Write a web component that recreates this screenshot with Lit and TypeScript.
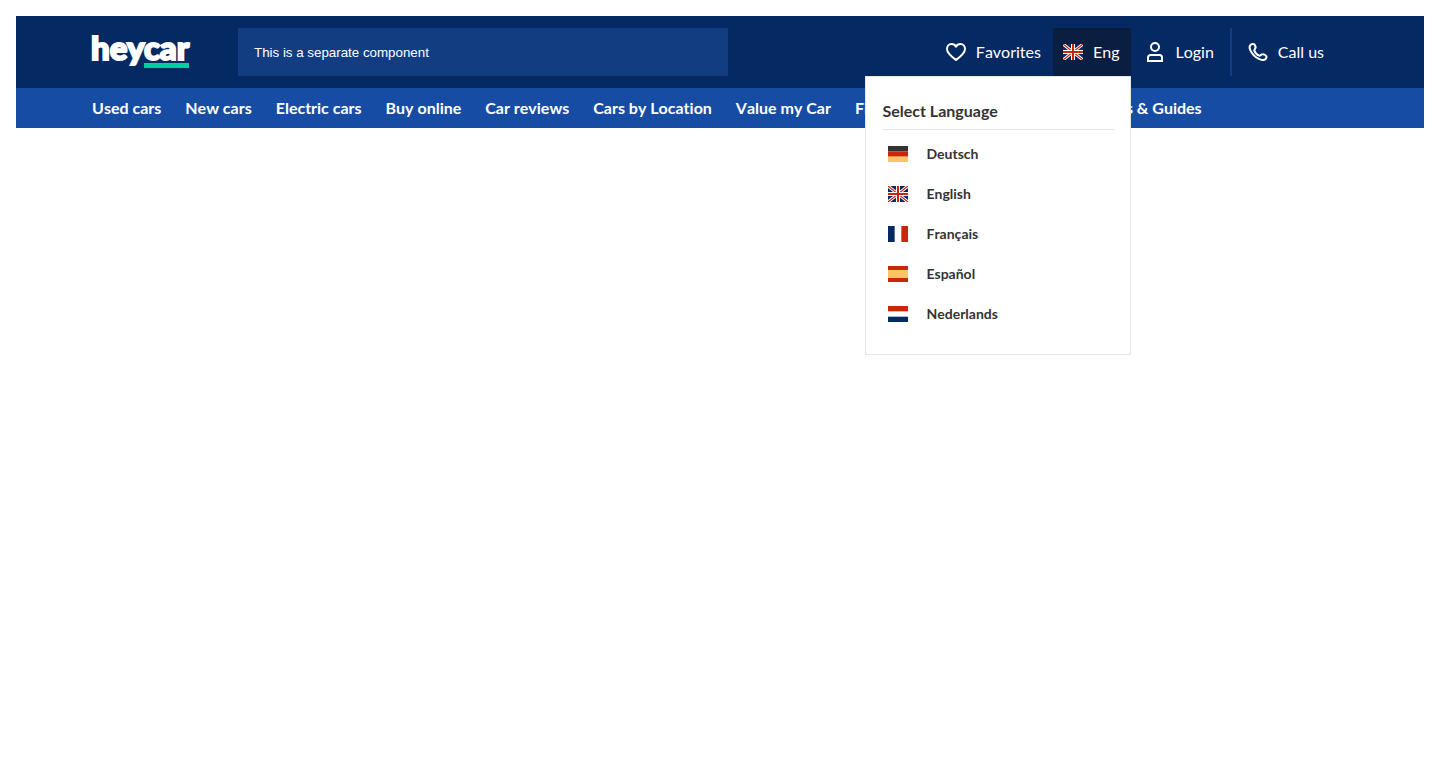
import { LitElement, html, css, svg } from "lit";
import { customElement, state } from "lit/decorators.js";

const flags: Record<string, unknown> = {
  de: svg`<path fill="#333" d="M0 0h20v5.33H0z"/><path fill="#c9260c" d="M0 5.33h20v5.34H0z"/><path fill="#fbc465" d="M0 10.67h20V16H0z"/>`,
  en: svg`<path fill="#052962" d="M0 0h20v16H0z"/>
    <path stroke="#fff" stroke-width="3" d="M0 0l20 16M20 0L0 16"/>
    <path stroke="#c9260c" stroke-width="1.2" d="M0 0l20 16M20 0L0 16"/>
    <path fill="#fff" d="M8 0h4v16H8zM0 6h20v4H0z"/>
    <path fill="#c9260c" d="M9 0h2v16H9zM0 7h20v2H0z"/>`,
  fr: svg`<path fill="#fff" d="M0 0h20v16H0z"/><path fill="#052962" d="M0 0h6.67v16H0z"/><path fill="#c9260c" d="M13.33 0H20v16h-6.67z"/>`,
  es: svg`<path fill="#c9260c" d="M0 0h20v16H0z"/><path fill="#fbc465" d="M0 4h20v8H0z"/>`,
  nl: svg`<path fill="#fff" d="M0 0h20v16H0z"/><path fill="#c9260c" d="M0 0h20v5.33H0z"/><path fill="#052962" d="M0 10.67h20V16H0z"/>`,
};

const flag = (code: string) =>
  html`<svg class="flag" viewBox="0 0 20 16" aria-hidden="true">${flags[code]}</svg>`;

const icon = (shape: unknown) =>
  html`<svg class="icon" viewBox="0 0 24 24" fill="none" stroke="#fff" stroke-width="2" aria-hidden="true">${shape}</svg>`;

const heart = svg`<path stroke-linejoin="round" d="M12 20C8 17 3 13.3 3 8.900C3 6 5 4 7.500 4C9.500 4 11.200 5 12 6.700C12.800 5 14.500 4 16.500 4C19 4 21 6 21 8.900C21 13.300 16 17 12 20Z"/>`;
const person = svg`<circle cx="12" cy="7" r="4"/><path d="M5 21v-3.500A2.500 2.500 0 0 1 7.500 15h9a2.500 2.500 0 0 1 2.500 2.500V21Z"/>`;
const phone = svg`<path stroke-linejoin="round" d="M4.300 5.200C5.500 3.800 7.600 3.500 8.600 4.700C9.500 5.900 9.800 7.400 9.200 8.600C8.800 9.400 8 9.700 8.300 10.600C9 12.800 11 14.700 13.300 15.600C14.200 15.900 14.500 15 15.300 14.700C16.700 14.100 18.800 14.600 20 15.700C21 16.700 20.500 18.500 19.200 19.400C17.700 20.500 15.500 20 13.400 19.100C9.400 17.400 5.900 13.800 4.200 9.800C3.500 8.200 3.200 6.500 4.300 5.200Z"/>`;

@customElement("app-root")
export class AppRoot extends LitElement {
  static styles = css`
    :host {
      display: block;
      box-sizing: border-box;
      min-height: 100vh;
      padding: 16px;
      font: 400 16px/24px Lato, sans-serif;
      font-kerning: none;
      font-variant-ligatures: none;
      color: #333;
    }
    a { color: inherit; text-decoration: none; }
    button { font: inherit; font-kerning: inherit; color: inherit; border: 0; background: none; margin: 0; cursor: pointer; }
    .top {
      display: flex;
      align-items: center;
      padding: 12px 76px;
      background: #052962;
      color: #fff;
    }
    .logo { display: block; width: 98px; height: 36px; margin-right: 48px; flex: none; }
    .logo svg { display: block; overflow: visible; }
    .wordmark {
      font: 900 33px Lato, sans-serif;
      font-kerning: normal;
      fill: #fff;
      stroke: #fff;
      stroke-width: 2px;
    }
    .search {
      box-sizing: border-box;
      flex: 0 1 490px;
      min-width: 0;
      height: 48px;
      padding: 0 16px;
      border: 0;
      border-radius: 0;
      background: #133d81;
      color: #fff;
      font-family: "Liberation Sans", sans-serif;
    }
    .search::placeholder { color: #fff; opacity: 1; }
    .actions { display: flex; margin-left: auto; white-space: nowrap; }
    .action {
      display: flex;
      align-items: center;
      gap: 8px;
      height: 48px;
      padding: 0 12px;
    }
    .icon { width: 24px; height: 24px; flex: none; }
    .flag { width: 20px; height: 16px; flex: none; }
    .language { position: relative; }
    .current { gap: 10px; padding: 0 12px 0 10px; background: #0a1e41; }
    .login { padding-right: 16px; }
    .call { padding: 0 24px 0 14px; border-left: 2px solid #133d81; }
    .menu {
      position: absolute;
      top: 48px;
      right: 0;
      box-sizing: border-box;
      width: 266px;
      padding: 22px 16px 20px;
      border: 1px solid #e6e6e6;
      background: #fff;
      color: #333;
    }
    .title {
      margin: 0 0 4px;
      padding-bottom: 6px;
      border-bottom: 1px solid #e6e6e6;
      font-weight: 700;
      font-size: 16px;
    }
    .list { margin: 0; padding: 0; list-style: none; }
    .option {
      display: flex;
      align-items: center;
      gap: 18px;
      width: 100%;
      height: 40px;
      padding: 0 6px;
      font-weight: 700;
      font-size: 14px;
    }
    .nav {
      display: flex;
      gap: 24px;
      padding: 8px 76px;
      background: #174ca5;
      color: #fff;
      font-weight: 700;
      white-space: nowrap;
    }
  `;

  @state() private open = true;

  private links = ["Used cars", "New cars", "Electric cars", "Buy online", "Car reviews",
    "Cars by Location", "Value my Car", "Finance", "Sell my car", "Electric News & Guides"];

  private languages = [["de", "Deutsch"], ["en", "English"], ["fr", "Français"], ["es", "Español"], ["nl", "Nederlands"]];

  render() {
    return html`
      <header>
        <div class="top">
          <a class="logo" href="#" aria-label="heycar home">
            <svg width="98" height="36" viewBox="0 0 98 36">
              <text class="wordmark" x="-1" y="26">heycar</text>
              <path fill="#00d0a1" d="M52 29h45v5H52z"/>
            </svg>
          </a>
          <input class="search" type="text" aria-label="Search" placeholder="This is a separate component">
          <div class="actions">
            <a class="action" href="#">${icon(heart)}Favorites</a>
            <div class="language">
              <button class="action current" aria-expanded=${this.open} @click=${() => (this.open = !this.open)}>
                ${flag("en")}Eng
              </button>
              ${this.open ? html`
                <div class="menu">
                  <h2 class="title">Select Language</h2>
                  <ul class="list">
                    ${this.languages.map(([code, name]) => html`
                      <li><button class="option" lang=${code}>${flag(code)}${name}</button></li>`)}
                  </ul>
                </div>` : ""}
            </div>
            <a class="action login" href="#">${icon(person)}Login</a>
            <a class="action call" href="#">${icon(phone)}Call us</a>
          </div>
        </div>
        <nav class="nav">${this.links.map((label) => html`<a href="#">${label}</a>`)}</nav>
      </header>
    `;
  }
}
